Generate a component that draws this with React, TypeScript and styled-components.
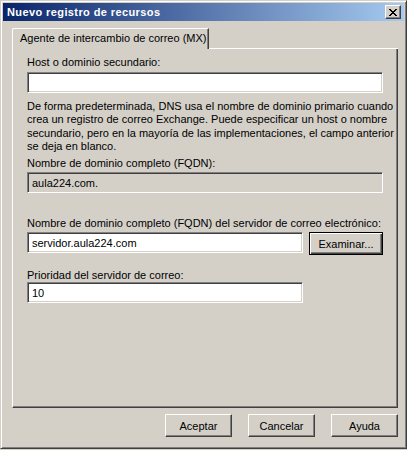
import React from "react";
import styled, { createGlobalStyle } from "styled-components";

const GlobalStyle = createGlobalStyle`
  html, body {
    margin: 0;
    padding: 0;
    background: #d4d0c8;
  }
  body {
    font-family: "Liberation Sans", Arial, sans-serif;
    font-size: 11px;
    color: #000;
  }
  * { box-sizing: border-box; }
`;

const Window = styled.div`
  width: 407px;
  height: 449px;
  background: #d4d0c8;
  border: 1px solid;
  border-color: #d4d0c8 #404040 #404040 #d4d0c8;
  box-shadow: inset 1px 1px #ffffff, inset -1px -1px #808080;
  padding: 2px;
  display: flex;
  flex-direction: column;
`;

const TitleBar = styled.div`
  height: 18px;
  flex: none;
  display: flex;
  align-items: center;
  justify-content: space-between;
  padding: 0 3px 0 4px;
  background: linear-gradient(to right, #0a246a, #a6caf0);
`;

const Title = styled.span`
  color: #fff;
  font-weight: bold;
  font-size: 11px;
  letter-spacing: 0.4px;
  line-height: 13px;
`;

const CloseButton = styled.button`
  width: 16px;
  height: 14px;
  padding: 0;
  margin: 0;
  background: #d4d0c8;
  border: 1px solid;
  border-color: #ffffff #404040 #404040 #ffffff;
  box-shadow: inset -1px -1px #808080;
  display: flex;
  align-items: center;
  justify-content: center;
`;

const Body = styled.div`
  flex: 1;
  display: flex;
  flex-direction: column;
  padding: 7px 6px 9px 9px;
`;

const TabStrip = styled.div`
  display: flex;
  height: 21px;
  flex: none;
`;

const Tab = styled.div`
  width: 197px;
  height: 21px;
  border-top: 1px solid #fff;
  border-left: 1px solid #fff;
  border-right: 1px solid #404040;
  border-top-left-radius: 2px;
  box-shadow: inset -1px 0 #808080;
  padding: 3px 0 0 7px;
  line-height: 13px;
  white-space: nowrap;
`;

const TabFiller = styled.div`
  flex: 1;
  border-bottom: 1px solid #fff;
`;

const Panel = styled.div`
  flex: 1;
  border-left: 1px solid #fff;
  border-right: 1px solid #404040;
  border-bottom: 1px solid #404040;
  box-shadow: inset -1px -1px #808080;
  padding: 7px 14px 0 14px;
  display: flex;
  flex-direction: column;
`;

const Label = styled.div<{ $mt?: number }>`
  line-height: 13px;
  height: 13px;
  margin-top: ${(p) => p.$mt ?? 0}px;
  white-space: nowrap;
`;

const TextBox = styled.input<{ $mt?: number; $w?: number; $disabled?: boolean }>`
  display: block;
  width: ${(p) => (p.$w ? `${p.$w}px` : "100%")};
  height: 21px;
  margin: ${(p) => p.$mt ?? 0}px 0 0 0;
  padding: 0 0 0 4px;
  font-family: "Liberation Sans", Arial, sans-serif;
  font-size: 11px;
  color: #000;
  background: ${(p) => (p.$disabled ? "#d4d0c8" : "#ffffff")};
  border: 1px solid;
  border-color: #808080 #ffffff #ffffff #808080;
  box-shadow: inset 1px 1px #404040, inset -1px -1px #d4d0c8;
  outline: none;
`;

const Paragraph = styled.p`
  margin: 7px 0 0 0;
  line-height: 13.33px;
  white-space: nowrap;
`;

const Row = styled.div<{ $mt?: number }>`
  display: flex;
  align-items: flex-start;
  gap: 6px;
  margin-top: ${(p) => p.$mt ?? 0}px;
`;

const Button = styled.button<{ $default?: boolean; $w: number }>`
  width: ${(p) => p.$w}px;
  height: 23px;
  padding: 0;
  margin: 0;
  font-family: "Liberation Sans", Arial, sans-serif;
  font-size: 11px;
  color: #000;
  background: #d4d0c8;
  border: 1px solid;
  border-color: ${(p) =>
    p.$default ? "#000000" : "#ffffff #404040 #404040 #ffffff"};
  box-shadow: ${(p) =>
    p.$default
      ? "inset 1px 1px #ffffff, inset -1px -1px #404040, inset -2px -2px #808080"
      : "inset -1px -1px #808080"};
`;

const ButtonRow = styled.div`
  display: flex;
  justify-content: flex-end;
  gap: 16px;
  margin-top: 6px;
  flex: none;
`;

const CloseGlyph = () => (
  <svg width="8" height="7" viewBox="0 0 8 7" shapeRendering="crispEdges">
    <path
      fill="#000"
      d="M0 0h2v1H0zM6 0h2v1H6zM1 1h2v1H1zM5 1h2v1H5zM2 2h4v1H2zM3 3h2v1H3zM2 4h4v1H2zM1 5h2v1H1zM5 5h2v1H5zM0 6h2v1H0zM6 6h2v1H6z"
    />
  </svg>
);

export default function App() {
  return (
    <>
      <GlobalStyle />
      <Window>
        <TitleBar>
          <Title>Nuevo registro de recursos</Title>
          <CloseButton aria-label="Cerrar">
            <CloseGlyph />
          </CloseButton>
        </TitleBar>
        <Body>
          <TabStrip>
            <Tab>Agente de intercambio de correo (MX)</Tab>
            <TabFiller />
          </TabStrip>
          <Panel>
            <Label>Host o dominio secundario:</Label>
            <TextBox $mt={3} defaultValue="" />
            <Paragraph>
              De forma predeterminada, DNS usa el nombre de dominio primario cuando
              <br />
              crea un registro de correo Exchange. Puede especificar un host o nombre
              <br />
              secundario, pero en la mayoría de las implementaciones, el campo anterior
              <br />
              se deja en blanco.
            </Paragraph>
            <Label $mt={4}>Nombre de dominio completo (FQDN):</Label>
            <TextBox $mt={2} $disabled readOnly defaultValue="aula224.com." />
            <Label $mt={24}>
              Nombre de dominio completo (FQDN) del servidor de correo electrónico:
            </Label>
            <Row $mt={2}>
              <TextBox $w={276} defaultValue="servidor.aula224.com" />
              <Button $default $w={74}>
                Examinar...
              </Button>
            </Row>
            <Label $mt={14}>Prioridad del servidor de correo:</Label>
            <TextBox $mt={0} $w={276} defaultValue="10" />
          </Panel>
          <ButtonRow>
            <Button $w={67}>Aceptar</Button>
            <Button $w={67}>Cancelar</Button>
            <Button $w={67}>Ayuda</Button>
          </ButtonRow>
        </Body>
      </Window>
    </>
  );
}
